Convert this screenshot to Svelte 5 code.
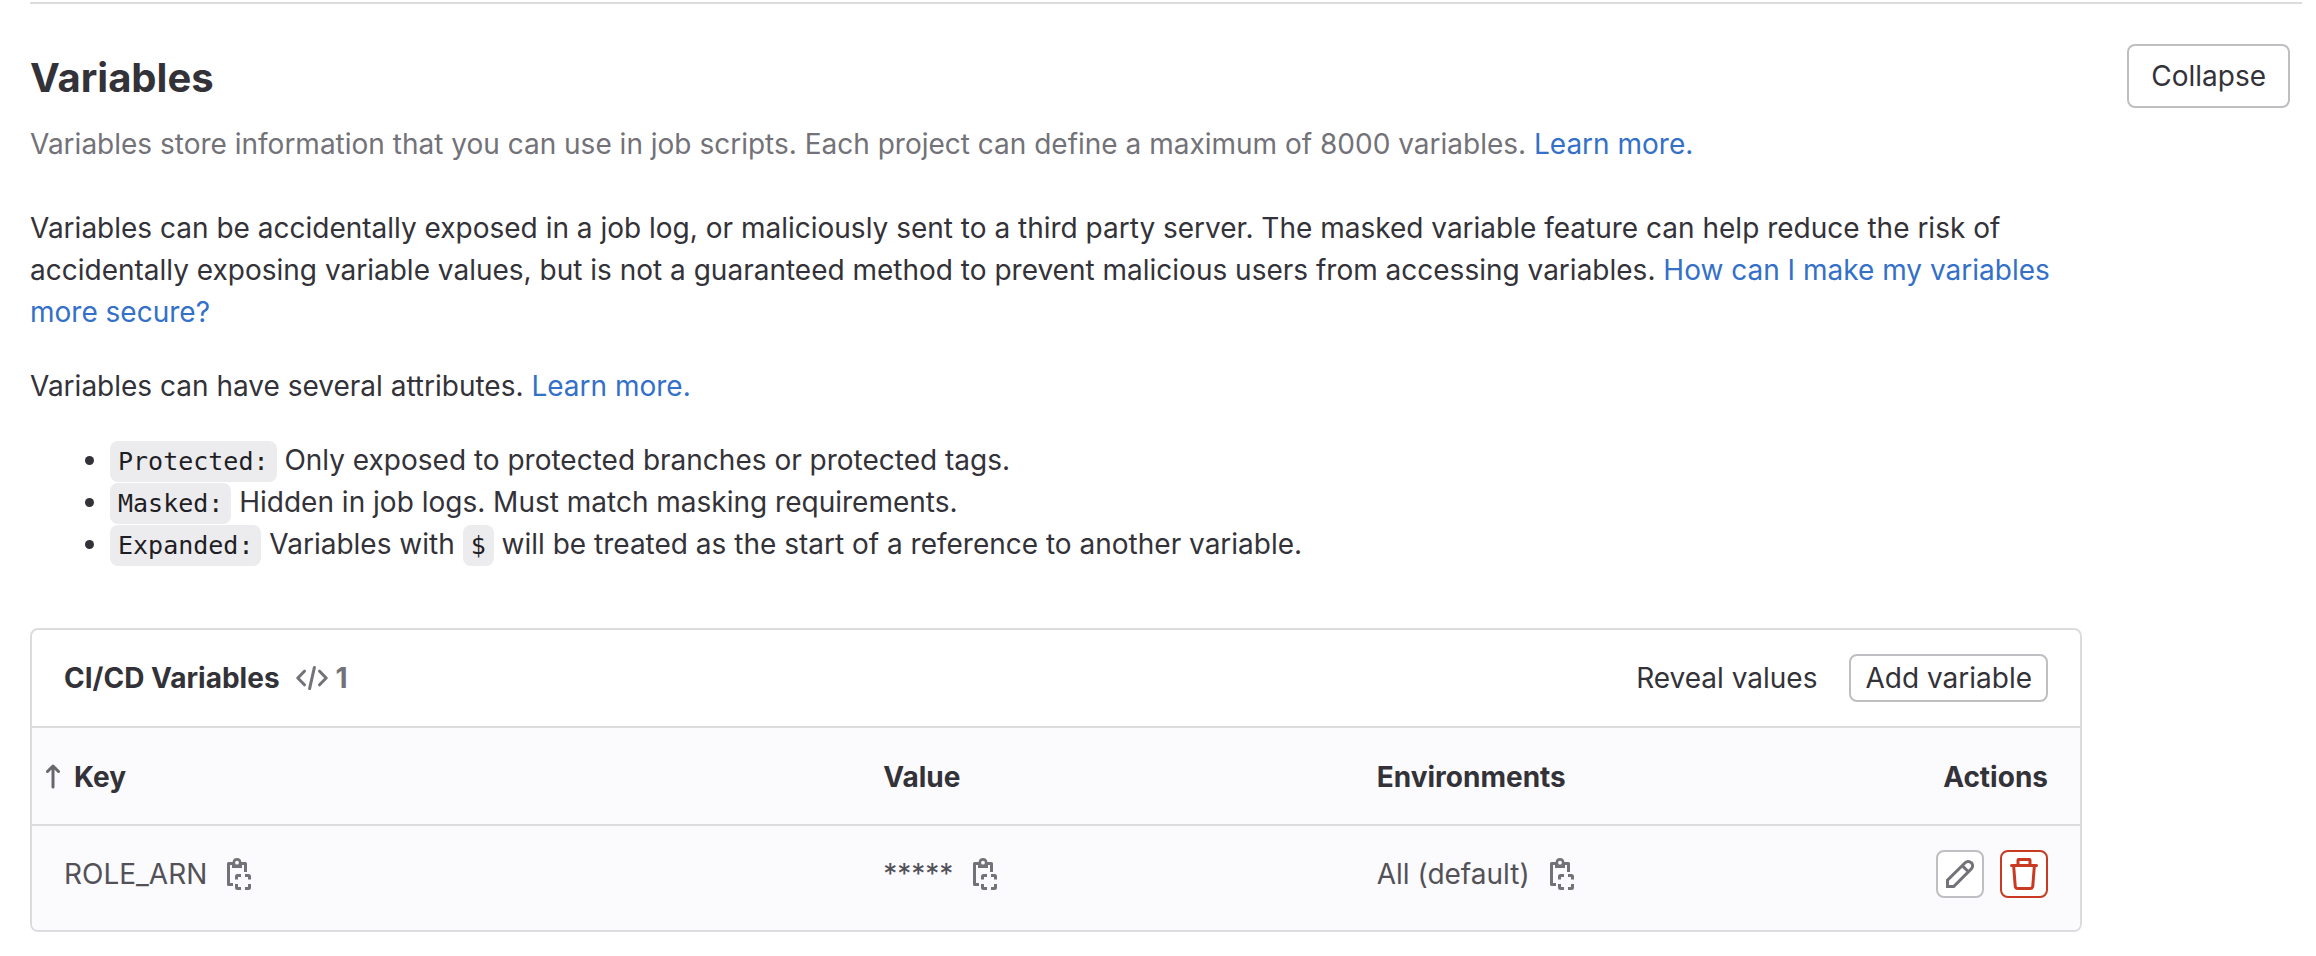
<script>
  const attributes = [
    { name: 'Protected:', text: 'Only exposed to protected branches or protected tags.' },
    { name: 'Masked:', text: 'Hidden in job logs. Must match masking requirements.' }
  ];
  const variables = [{ key: 'ROLE_ARN', value: '*****', environment: 'All (default)' }];
</script>

{#snippet copyButton(label)}
  <button class="copy" type="button" aria-label={label}>
    <svg viewBox="0 0 16 16" fill="none" stroke="currentColor" stroke-width="1.5">
      <path d="M5 13.25H2.75V2.75h2.2M9.1 2.75h2.15V7" stroke-linejoin="round" />
      <path
        d="M7 0a2.25 2.25 0 0 1 2.2 2H9.5v3h-5V2h.3A2.25 2.25 0 0 1 7 0zm0 1.4a.95.95 0 1 0 0 1.9.95.95 0 0 0 0-1.9z"
        fill="currentColor"
        stroke="none"
        fill-rule="evenodd"
      />
      <path
        d="M6.75 10.8V9.25a.5.5 0 0 1 .5-.5H9M11 8.75h1.75a.5.5 0 0 1 .5.5v1.55M13.25 13v1.75a.5.5 0 0 1-.5.5H11M9 15.25H7.25a.5.5 0 0 1-.5-.5V13"
      />
    </svg>
  </button>
{/snippet}

<section class="settings">
  <header class="section-head">
    <div>
      <h2>Variables</h2>
      <p class="lead">
        Variables store information that you can use in job scripts. Each project can define a
        maximum of 8000 variables. <a href="#limits">Learn more.</a>
      </p>
    </div>
    <button class="btn large" type="button">Collapse</button>
  </header>

  <div class="content">
    <p>
      Variables can be accidentally exposed in a job log, or maliciously sent to a third party
      server. The masked variable feature can help reduce the risk of accidentally exposing variable
      values, but is not a guaranteed method to prevent malicious users from accessing variables.
      <a href="#security">How can I make my variables more secure?</a>
    </p>
    <p>Variables can have several attributes. <a href="#attributes">Learn more.</a></p>
    <ul>
      {#each attributes as attribute}
        <li><code>{attribute.name}</code> {attribute.text}</li>
      {/each}
      <li>
        <code>Expanded:</code> Variables with <code>$</code> will be treated as the start of a
        reference to another variable.
      </li>
    </ul>

    <div class="card">
      <div class="card-head">
        <h3>CI/CD Variables</h3>
        <span class="count">
          <svg
            viewBox="0 0 16 16"
            fill="none"
            stroke="currentColor"
            stroke-width="1.5"
            stroke-linecap="round"
            stroke-linejoin="round"
            aria-hidden="true"
          >
            <path d="M4.2 4.6.9 8l3.3 3.4M11.8 4.6 15.1 8l-3.3 3.4M9.2 2.7 6.8 13.3" />
          </svg>
          {variables.length}
        </span>
        <div class="card-actions">
          <button class="btn plain" type="button">Reveal values</button>
          <button class="btn" type="button">Add variable</button>
        </div>
      </div>
      <table>
        <colgroup>
          <col class="col-key" />
          <col class="col-value" />
          <col />
          <col class="col-actions" />
        </colgroup>
        <thead>
          <tr>
            <th class="sorted" scope="col" aria-sort="ascending">
              <span class="sort">
                <svg
                  viewBox="0 0 14 26"
                  fill="none"
                  stroke="currentColor"
                  stroke-width="3"
                  stroke-linecap="round"
                  stroke-linejoin="round"
                  aria-hidden="true"
                >
                  <path d="M7 23V2.5M1.5 7.5 7 2 12.5 7.5" />
                </svg>
                Key
              </span>
            </th>
            <th scope="col">Value</th>
            <th scope="col">Environments</th>
            <th class="end" scope="col">Actions</th>
          </tr>
        </thead>
        <tbody>
          {#each variables as variable}
            <tr>
              <td>
                <div class="cell">{variable.key} {@render copyButton('Copy key')}</div>
              </td>
              <td>
                <div class="cell">{variable.value} {@render copyButton('Copy value')}</div>
              </td>
              <td>
                <div class="cell">
                  {variable.environment}
                  {@render copyButton('Copy environment')}
                </div>
              </td>
              <td>
                <div class="cell row-actions">
                  <button class="btn icon" type="button" aria-label="Edit">
                    <svg viewBox="0 0 16 16" fill="none" stroke="currentColor" stroke-width="1.5">
                      <path
                        d="M1.75 14.25v-3.2l8.8-8.7a2.15 2.15 0 0 1 3.1 0 2.15 2.15 0 0 1 0 3.1l-8.8 8.8zM9.1 3.8l3.1 3.1"
                      />
                    </svg>
                  </button>
                  <button class="btn icon danger" type="button" aria-label="Delete">
                    <svg viewBox="0 0 16 16" fill="currentColor">
                      <path
                        fill-rule="evenodd"
                        d="M5.75 3V1.5h4.5V3h-4.5zm-1.5 0V1a1 1 0 0 1 1-1h5.5a1 1 0 0 1 1 1v2h2.5a.75.75 0 0 1 0 1.5h-.365l-.743 9.653A2 2 0 0 1 11.148 16H4.852a2 2 0 0 1-1.994-1.847L2.115 4.5H1.75a.75.75 0 0 1 0-1.5h2.5zm-.63 1.5.734 9.538a.5.5 0 0 0 .498.462h6.296a.5.5 0 0 0 .499-.462L12.38 4.5H3.62z"
                      />
                    </svg>
                  </button>
                </div>
              </td>
            </tr>
          {/each}
        </tbody>
      </table>
    </div>
  </div>
</section>

<style>
  :global(body) {
    background: #fff;
  }

  .settings {
    margin: 2px 14px 24px 30px;
    padding: 40px 12px 0 0;
    border-top: 2px solid #dcdcde;
    color: #333238;
    font: 430 28px/42px Inter, 'Liberation Sans', sans-serif;
  }

  h2,
  h3,
  p,
  ul {
    margin: 0;
  }

  a {
    color: #3470c8;
    text-decoration: none;
  }

  svg {
    display: block;
    flex: none;
    width: 32px;
    height: 32px;
  }

  .section-head {
    display: flex;
    align-items: flex-start;
    justify-content: space-between;
    gap: 24px;
  }

  h2 {
    margin: 10px 0 21px;
    font-size: 40px;
    font-weight: 650;
    line-height: 48px;
  }

  .lead {
    color: #737278;
  }

  .content {
    max-width: 2052px;
    margin-top: 42px;
  }

  .content p {
    margin-bottom: 32px;
  }

  ul {
    padding-left: 80px;
  }

  code {
    padding: 6px 8px;
    border-radius: 8px;
    background: #ececef;
    color: #1f1e24;
    font: 25px/34px 'DejaVu Sans Mono', monospace;
  }

  .btn {
    display: flex;
    align-items: center;
    height: 48px;
    padding: 0 14px;
    border: 2px solid #bfbfc3;
    border-radius: 8px;
    background: #fff;
    color: #333238;
    font: inherit;
    line-height: 32px;
    white-space: nowrap;
    cursor: pointer;
  }

  .btn.large {
    height: 64px;
    padding: 0 22px;
  }

  .btn.plain {
    border-color: transparent;
    background: transparent;
  }

  .btn.icon {
    padding: 0 6px;
    color: #737278;
  }

  .btn.danger {
    border-color: #c93a22;
    color: #c93a22;
  }

  .card {
    margin-top: 63px;
    border: 2px solid #dcdcde;
    border-radius: 8px;
    overflow: hidden;
  }

  .card-head {
    display: flex;
    align-items: center;
    gap: 16px;
    padding: 24px 32px;
  }

  h3 {
    font-size: 28px;
    font-weight: 650;
    line-height: 42px;
  }

  .count {
    display: flex;
    align-items: center;
    gap: 8px;
    color: #737278;
    font-weight: 650;
  }

  .card-actions {
    display: flex;
    gap: 16px;
    margin-left: auto;
  }

  table {
    width: 100%;
    border-collapse: collapse;
    table-layout: fixed;
    background: #fbfafd;
  }

  .col-key {
    width: 40%;
  }

  .col-value {
    width: 24.1%;
  }

  .col-actions {
    width: 12%;
  }

  th {
    padding: 28px 32px 26px;
    border-top: 2px solid #dcdcde;
    font-weight: 650;
    text-align: left;
  }

  th.sorted {
    padding-left: 14px;
  }

  th.end {
    text-align: right;
  }

  .sort {
    display: flex;
    align-items: center;
    gap: 14px;
  }

  .sort svg {
    width: 14px;
    height: 26px;
    color: #68676c;
  }

  td {
    padding: 24px 32px 32px;
    border-top: 2px solid #dcdcde;
    color: #535158;
  }

  .cell {
    display: flex;
    align-items: center;
    gap: 8px;
    min-height: 48px;
  }

  .row-actions {
    justify-content: flex-end;
    gap: 16px;
  }

  .copy {
    padding: 8px;
    border: 0;
    background: none;
    color: #737278;
    cursor: pointer;
  }
</style>
